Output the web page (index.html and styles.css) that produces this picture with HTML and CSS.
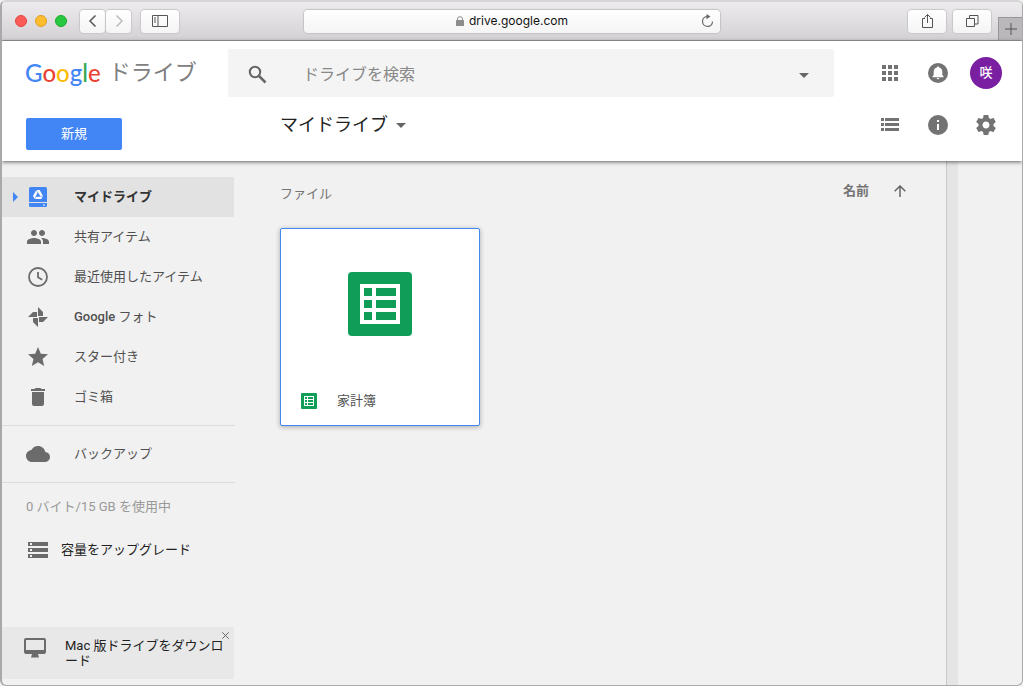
FILE: index.html
```html
<!DOCTYPE html>
<html lang="ja">
<head>
<meta charset="utf-8">
<title>マイドライブ - Google ドライブ</title>
<link rel="stylesheet" href="styles.css">
</head>
<body>
<div class="window">
  <div class="toolbar">
    <div class="toolbar-left">
      <div class="lights"><span class="light red"></span><span class="light yellow"></span><span class="light green"></span></div>
      <div class="history">
        <button class="tool narrow" aria-label="戻る"><svg width="10" height="14" viewBox="0 0 10 14"><path d="M7.500 1.500L2 7l5.500 5.500" fill="none" stroke="#555" stroke-width="1.500"/></svg></button>
        <button class="tool narrow" aria-label="進む"><svg width="10" height="14" viewBox="0 0 10 14"><path d="M2.500 1.500L8 7l-5.500 5.500" fill="none" stroke="#bbb" stroke-width="1.500"/></svg></button>
      </div>
      <button class="tool" aria-label="サイドバー"><svg width="16" height="12" viewBox="0 0 16 12"><path d="M.5.5h15v11H.5zM6 .5v11M2 3h2M2 5h2M2 7h2" fill="none" stroke="#555"/></svg></button>
    </div>
    <div class="address">
      <div class="host"><svg width="8" height="10" viewBox="0 0 8 10"><rect y="4" width="8" height="6" rx=".5" fill="#8c8c8c"/><path d="M1.500 5V3a2.500 2.300 0 0 1 5 0v2" fill="none" stroke="#8c8c8c"/></svg><span>drive.google.com</span></div>
      <button class="reload" aria-label="再読み込み"><svg width="13" height="14" viewBox="0 0 13 14"><path d="M6 2.500a5 5 0 1 0 5.500 5" fill="none" stroke="#666" stroke-width="1.200"/><path d="M5.500 0L9.500 2.500l-4 2.700z" fill="#666"/></svg></button>
    </div>
    <div class="toolbar-right">
      <button class="tool" aria-label="共有"><svg width="13" height="16" viewBox="0 0 13 16"><path d="M4 5.500H1.500v9h10v-9H9M6.500 10V1.500M3.500 4.500l3-3 3 3" fill="none" stroke="#555"/></svg></button>
      <button class="tool" aria-label="タブを表示"><svg width="13" height="13" viewBox="0 0 13 13"><path d="M.5 3.500h8v8h-8zM3.500 3V.5h8.500v8.500H9" fill="none" stroke="#555"/></svg></button>
      <button class="new-tab" aria-label="新規タブ"><svg width="12" height="12" viewBox="0 0 12 12"><path d="M6 0v12M0 6h12" stroke="#555"/></svg></button>
    </div>
  </div>

  <header class="header">
    <div class="brand"><span class="google"><span class="g-blue">G</span><span class="g-red">o</span><span class="g-yellow">o</span><span class="g-blue">g</span><span class="g-green">l</span><span class="g-red">e</span></span><span class="product">ドライブ</span></div>
    <form class="search">
      <button type="button" class="plain" aria-label="検索"><svg width="20" height="20" viewBox="0 0 20 20"><circle cx="7" cy="7" r="5.200" fill="none" stroke="#666" stroke-width="2.100"/><path d="M11 11l6.500 6.500" stroke="#666" stroke-width="2.500"/></svg></button>
      <input type="text" placeholder="ドライブを検索" aria-label="ドライブを検索">
      <button type="button" class="plain" aria-label="検索オプション"><svg width="10" height="5" viewBox="0 0 10 5"><path d="M0 0h10L5 5z" fill="#666"/></svg></button>
    </form>
    <div class="icons">
      <button class="icon-button" aria-label="アプリ"><svg width="16" height="16" viewBox="0 0 16 16" fill="#737373"><path d="M0 0h4v4H0zM6 0h4v4H6zM12 0h4v4h-4zM0 6h4v4H0zM6 6h4v4H6zM12 6h4v4h-4zM0 12h4v4H0zM6 12h4v4H6zM12 12h4v4h-4z"/></svg></button>
      <button class="icon-button" aria-label="通知"><svg width="20" height="20" viewBox="0 0 20 20"><circle cx="10" cy="10" r="10" fill="#737373"/><path d="M10 3.500c-.7 0-1.100.4-1.100 1C6.800 5 5.700 6.600 5.700 8.700V12L4.500 13.500v.7h11v-.7L14.300 12V8.700c0-2.100-1.100-3.700-3.200-4.200 0-.6-.4-1-1.100-1zM8.700 15a1.300 1.300 0 0 0 2.600 0z" fill="#fff"/></svg></button>
      <button class="icon-button avatar">咲</button>
    </div>
    <div class="create"><button class="new">新規</button></div>
    <div class="crumb"><button class="folder">マイドライブ<svg width="10" height="5" viewBox="0 0 10 5"><path d="M0 0h10L5 5z" fill="#666"/></svg></button></div>
    <div class="icons">
      <button class="icon-button" aria-label="リスト表示"><svg width="18" height="14" viewBox="0 0 18 14" fill="#737373"><path d="M0 0h3v3H0zM4 0h14v3H4zM0 5h3v3H0zM4 5h14v3H4zM0 10h3v3H0zM4 10h14v3H4z"/></svg></button>
      <button class="icon-button" aria-label="詳細"><svg width="20" height="20" viewBox="0 0 20 20"><circle cx="10" cy="10" r="10" fill="#737373"/><path d="M9 5h2v2H9zM9 9h2v6H9z" fill="#fff"/></svg></button>
      <button class="icon-button" aria-label="設定"><svg width="24" height="24" viewBox="0 0 24 24" fill="#737373"><path d="M19.430 12.980c.04-.32.07-.64.07-.98s-.03-.66-.07-.98l2.110-1.650c.19-.15.240-.42.120-.64l-2-3.460c-.12-.22-.39-.3-.61-.22l-2.490 1c-.52-.4-1.080-.73-1.690-.98l-.38-2.650C14.460 2.180 14.250 2 14 2h-4c-.25 0-.46.18-.49.42l-.38 2.650c-.61.25-1.170.59-1.690.98l-2.490-1c-.23-.09-.49 0-.61.22l-2 3.460c-.13.22-.07.49.12.64l2.110 1.650c-.04.32-.07.65-.07.98s.03.66.07.98l-2.110 1.650c-.19.15-.24.42-.12.64l2 3.460c.12.22.39.3.61.22l2.490-1c.52.4 1.080.73 1.690.98l.38 2.650c.03.24.24.42.49.42h4c.25 0 .46-.18.49-.42l.38-2.650c.61-.25 1.170-.59 1.690-.98l2.490 1c.23.09.49 0 .61-.22l2-3.460c.12-.22.07-.49-.12-.64l-2.110-1.650zM12 15.500c-1.930 0-3.500-1.570-3.500-3.500s1.570-3.500 3.500-3.500 3.500 1.570 3.500 3.500-1.570 3.500-3.500 3.500z"/></svg></button>
    </div>
  </header>

  <div class="body">
    <aside class="sidebar">
      <nav class="nav">
        <a class="item active" href="#"><svg class="expand" width="5" height="10" viewBox="0 0 5 10"><path d="M0 0l5 5-5 5z" fill="#4285f4"/></svg><span class="glyph"><svg width="18" height="20" viewBox="0 0 18 20"><path d="M1.500 0h15A1.500 1.500 0 0 1 18 1.500V15H0V1.500A1.500 1.500 0 0 1 1.500 0zM0 16h18v2.500a1.500 1.500 0 0 1-1.500 1.500h-15A1.500 1.500 0 0 1 0 18.500z" fill="#4285f4"/><path d="M7.200 3h3.400l3.400 6-1.700 3H5.700L4 9z" fill="#fff"/><path d="M8.900 6l1.900 3.300H7zM7.200 3l3.500 6M5.700 12l1.500-3M7 9.300h6.800" fill="#4285f4" stroke="#4285f4" stroke-width=".6"/><path d="M14 17.500h2v1h-2z" fill="#fff"/></svg></span>マイドライブ</a>
        <a class="item" href="#"><span class="glyph"><svg width="24" height="24" viewBox="0 0 24 24"><path d="M16 11c1.660 0 2.990-1.340 2.990-3S17.660 5 16 5s-3 1.340-3 3 1.340 3 3 3zm-8 0c1.660 0 2.990-1.340 2.990-3S9.660 5 8 5 5 6.340 5 8s1.340 3 3 3zm0 2c-2.330 0-7 1.170-7 3.500V19h14v-2.500c0-2.330-4.670-3.500-7-3.500zm8 0c-.29 0-.62.020-.97.050 1.160.84 1.970 1.970 1.970 3.450V19h6v-2.500c0-2.330-4.670-3.500-7-3.500z"/></svg></span>共有アイテム</a>
        <a class="item" href="#"><span class="glyph"><svg width="20" height="20" viewBox="0 0 20 20"><path d="M10 1a9 9 0 1 0 0 18 9 9 0 0 0 0-18zM10 5v5.300l4.200 2.500" fill="none" stroke="#6b6b6b" stroke-width="1.800"/></svg></span>最近使用したアイテム</a>
        <a class="item" href="#"><span class="glyph"><svg width="20" height="20" viewBox="0 0 20 20"><path d="M10 0l5 5v4h-5zM20 10l-5 5h-4v-5zM10 20l-5-5v-4h5zM0 10l5-5h4v5z"/></svg></span><span><b class="latin">Google</b> フォト</span></a>
        <a class="item" href="#"><span class="glyph"><svg width="24" height="24" viewBox="0 0 24 24"><path d="M12 17.270L18.180 21l-1.640-7.030L22 9.240l-7.190-.61L12 2 9.190 8.630 2 9.240l5.460 4.730L5.820 21z"/></svg></span>スター付き</a>
        <a class="item" href="#"><span class="glyph"><svg width="24" height="24" viewBox="0 0 24 24"><path d="M6 19c0 1.100.9 2 2 2h8c1.100 0 2-.9 2-2V7H6v12zM19 4h-3.500l-1-1h-5l-1 1H5v2h14V4z"/></svg></span>ゴミ箱</a>
      </nav>
      <nav class="nav backup">
        <a class="item" href="#"><span class="glyph"><svg width="24" height="24" viewBox="0 0 24 24"><path d="M19.350 10.040C18.670 6.590 15.640 4 12 4 9.110 4 6.600 5.640 5.350 8.040 2.340 8.360 0 10.910 0 14c0 3.310 2.690 6 6 6h13c2.760 0 5-2.240 5-5 0-2.640-2.050-4.780-4.650-4.960z"/></svg></span>バックアップ</a>
      </nav>
      <p class="quota">0 バイト/15 GB を使用中</p>
      <a class="upgrade" href="#"><svg width="20" height="16" viewBox="0 0 20 16"><path d="M0 0h20v4H0zM0 6h20v4H0zM0 12h20v4H0z" fill="#6b6b6b"/><path d="M2 1h2v2H2zM2 7h2v2H2zM2 13h2v2H2z" fill="#f1f1f1"/></svg>容量をアップグレード</a>
      <div class="promo">
        <svg width="22" height="20" viewBox="0 0 22 20"><path d="M2 0h18a2 2 0 0 1 2 2v12a2 2 0 0 1-2 2h-6l1 3.500H7L8 16H2a2 2 0 0 1-2-2V2a2 2 0 0 1 2-2zm0 2v10h18V2z" fill="#6b6b6b" fill-rule="evenodd"/></svg>
        <a href="#">Mac 版ドライブをダウンロード</a>
        <button class="close" aria-label="閉じる"><svg width="7" height="7" viewBox="0 0 7 7"><path d="M.3.300l6.400 6.400M6.700.3L.3 6.700" stroke="#666"/></svg></button>
      </div>
    </aside>
    <main class="content">
      <div class="list-head"><h2>ファイル</h2><button class="sort">名前<svg width="12" height="12" viewBox="0 0 12 12"><path d="M6 12V1M.7 6.300L6 1l5.300 5.300" fill="none" stroke="#666" stroke-width="1.500"/></svg></button></div>
      <a class="card" href="#">
        <span class="preview"><svg width="64" height="64" viewBox="0 0 64 64"><rect width="64" height="64" rx="4" fill="#0f9d58"/><path d="M12 12h40v40H12zM16 16v8h8v-8zM28 16v8h20v-8zM16 28v8h8v-8zM28 28v8h20v-8zM16 40v8h8v-8zM28 40v8h20v-8z" fill="#fff" fill-rule="evenodd"/></svg></span>
        <span class="caption"><svg width="16" height="16" viewBox="0 0 16 16"><rect width="16" height="16" rx="1" fill="#0f9d58"/><path d="M3 3h10v10H3zM4 4v2h2V4zM7 4v2h5V4zM4 7v2h2V7zM7 7v2h5V7zM4 10v2h2v-2zM7 10v2h5v-2z" fill="#fff" fill-rule="evenodd"/></svg>家計簿</span>
      </a>
    </main>
    <div class="gutter"></div>
    <div class="panel"></div>
  </div>
</div>
</body>
</html>
```

FILE: styles.css
```css
* { box-sizing: border-box; }
body {
  margin: 0;
  background: #f0f0f0;
  color: #505050;
  font: 13px/20px Roboto, "Noto Sans CJK JP", sans-serif;
}
button {
  display: flex;
  align-items: center;
  justify-content: center;
  margin: 0;
  padding: 0;
  border: 0;
  background: none;
  color: inherit;
  font: inherit;
}
a { color: inherit; text-decoration: none; }
svg { display: block; flex: none; }

.window {
  display: flex;
  flex-direction: column;
  height: 100vh;
  border: solid #a9a9a9;
  border-width: 2px 1px 1px 2px;
  border-top-color: #d6d6d6;
  border-radius: 6px;
  background: #f1f1f1;
  overflow: hidden;
}

/* Browser toolbar */
.toolbar {
  display: grid;
  grid-template-columns: 1fr 41% 1fr;
  align-items: center;
  flex: none;
  height: 39px;
  border-bottom: 1px solid #9d9b9e;
  background: linear-gradient(#edebed, #d3d1d4);
}
.toolbar-left { display: flex; align-items: center; gap: 10px; padding-left: 13px; }
.lights { display: flex; gap: 8px; margin-right: 3px; }
.light { width: 12px; height: 12px; border: 1px solid; border-radius: 50%; }
.red { background: #fc5b57; border-color: #e2463f; }
.yellow { background: #fdbd2f; border-color: #dfa023; }
.green { background: #28c840; border-color: #1aab29; }
.history { display: flex; gap: 1px; }
.tool {
  width: 38px;
  height: 23px;
  border-radius: 4px;
  background: linear-gradient(#fff, #f4f4f4);
  box-shadow: 0 0 1px 1px #c8c6c9;
}
.narrow { width: 25px; }
.address {
  display: flex;
  align-items: center;
  height: 23px;
  margin: 0 1px;
  padding-right: 6px;
  border-radius: 4px;
  background: linear-gradient(#fff, #f4f4f4);
  box-shadow: 0 0 1px 1px #c4c2c5;
}
.host {
  display: flex;
  align-items: center;
  justify-content: center;
  gap: 5px;
  flex: 1;
  padding-left: 19px;
  color: #111;
  font: 12px/20px Inter, sans-serif;
}
.toolbar-right { display: flex; align-items: center; justify-content: flex-end; gap: 7px; height: 100%; }
.new-tab {
  align-self: flex-end;
  width: 24px;
  height: 23px;
  border: solid #98969a;
  border-width: 1px 0 0 1px;
  background: #bab8bb;
}

/* Drive header */
.header {
  display: grid;
  grid-template-columns: 226px 1fr 188px;
  grid-template-rows: 48px 56px;
  flex: none;
  padding: 8px 0;
  background: #fff;
  box-shadow: 0 1px 4px rgba(0, 0, 0, .6);
  z-index: 1;
}
.brand { display: flex; align-items: center; gap: 8px; padding-left: 23px; }
.google { font: 500 24px/32px Lato, sans-serif; }
.g-blue { color: #4285f4; }
.g-red { color: #ea4335; }
.g-yellow { color: #fbbc05; }
.g-green { color: #34a853; }
.product { color: #808080; font-size: 22px; line-height: 32px; }
.search {
  display: flex;
  align-items: center;
  gap: 35px;
  padding: 4px 25px 0 20px;
  border-radius: 2px;
  background: #f4f4f4;
}
.search input {
  flex: 1;
  min-width: 0;
  padding: 0;
  border: 0;
  outline: 0;
  background: none;
  font: 16px/24px Roboto, "Noto Sans CJK JP", sans-serif;
}
.search input::placeholder { color: #888; opacity: 1; }
.icons { display: flex; align-items: center; justify-content: flex-end; gap: 16px; padding-right: 20px; }
.icon-button { width: 32px; height: 32px; }
.avatar { border-radius: 50%; background: #7b1fa2; color: #fff; font-weight: 500; }
.create { display: flex; align-items: center; padding: 17px 0 0 24px; }
.new { width: 96px; height: 32px; border-radius: 2px; background: #4285f4; color: #fff; }
.crumb { display: flex; align-items: center; padding-left: 52px; }
.folder { gap: 8px; color: #222; font-size: 18px; line-height: 24px; }

/* Page body */
.body { display: flex; flex: 1; min-height: 0; }
.sidebar { display: flex; flex-direction: column; width: 233px; padding: 16px 0 6px; }
.nav { padding-bottom: 8px; border-bottom: 1px solid #dcdcdc; }
.backup { padding-top: 8px; }
.item { position: relative; display: flex; align-items: center; gap: 24px; height: 40px; margin-right: 1px; padding-left: 24px; }
.item svg { fill: #6b6b6b; }
.active { background: #e2e2e2; color: #333; font-weight: 700; }
.expand { position: absolute; left: 11px; }
.glyph { display: flex; align-items: center; justify-content: center; width: 24px; height: 24px; }
.latin { font-weight: 500; }
.quota { margin: 14px 0 0 24px; color: #999; }
.upgrade { display: flex; align-items: center; gap: 13px; margin-top: 23px; padding-left: 26px; color: #222; }
.promo {
  position: relative;
  display: flex;
  align-items: flex-start;
  gap: 19px;
  margin: auto 1px 0 0;
  padding: 11px 8px 11px 22px;
  background: #e8e8e8;
  color: #222;
  line-height: 15px;
  line-break: anywhere;
}
.close { position: absolute; top: 5px; right: 5px; }

.content { flex: 1; padding: 20px 40px 0 45px; }
.list-head { display: flex; align-items: flex-start; justify-content: space-between; color: #737373; }
.list-head h2 { margin: 3px 0 0; font-size: 13px; font-weight: 400; }
.sort { gap: 25px; font-weight: 700; }
.card {
  display: flex;
  flex-direction: column;
  width: 200px;
  height: 198px;
  margin-top: 24px;
  border: 1px solid #4285f4;
  border-radius: 2px;
  background: #fff;
  box-shadow: 0 1px 5px rgba(0, 0, 0, .3);
}
.preview { display: flex; align-items: center; justify-content: center; flex: 1; padding-top: 2px; }
.caption { display: flex; align-items: center; gap: 20px; height: 48px; padding-left: 20px; }
.gutter { width: 12px; border-left: 1px solid #c8c8c8; background: #e5e5e5; }
.panel { width: 64px; }
```
